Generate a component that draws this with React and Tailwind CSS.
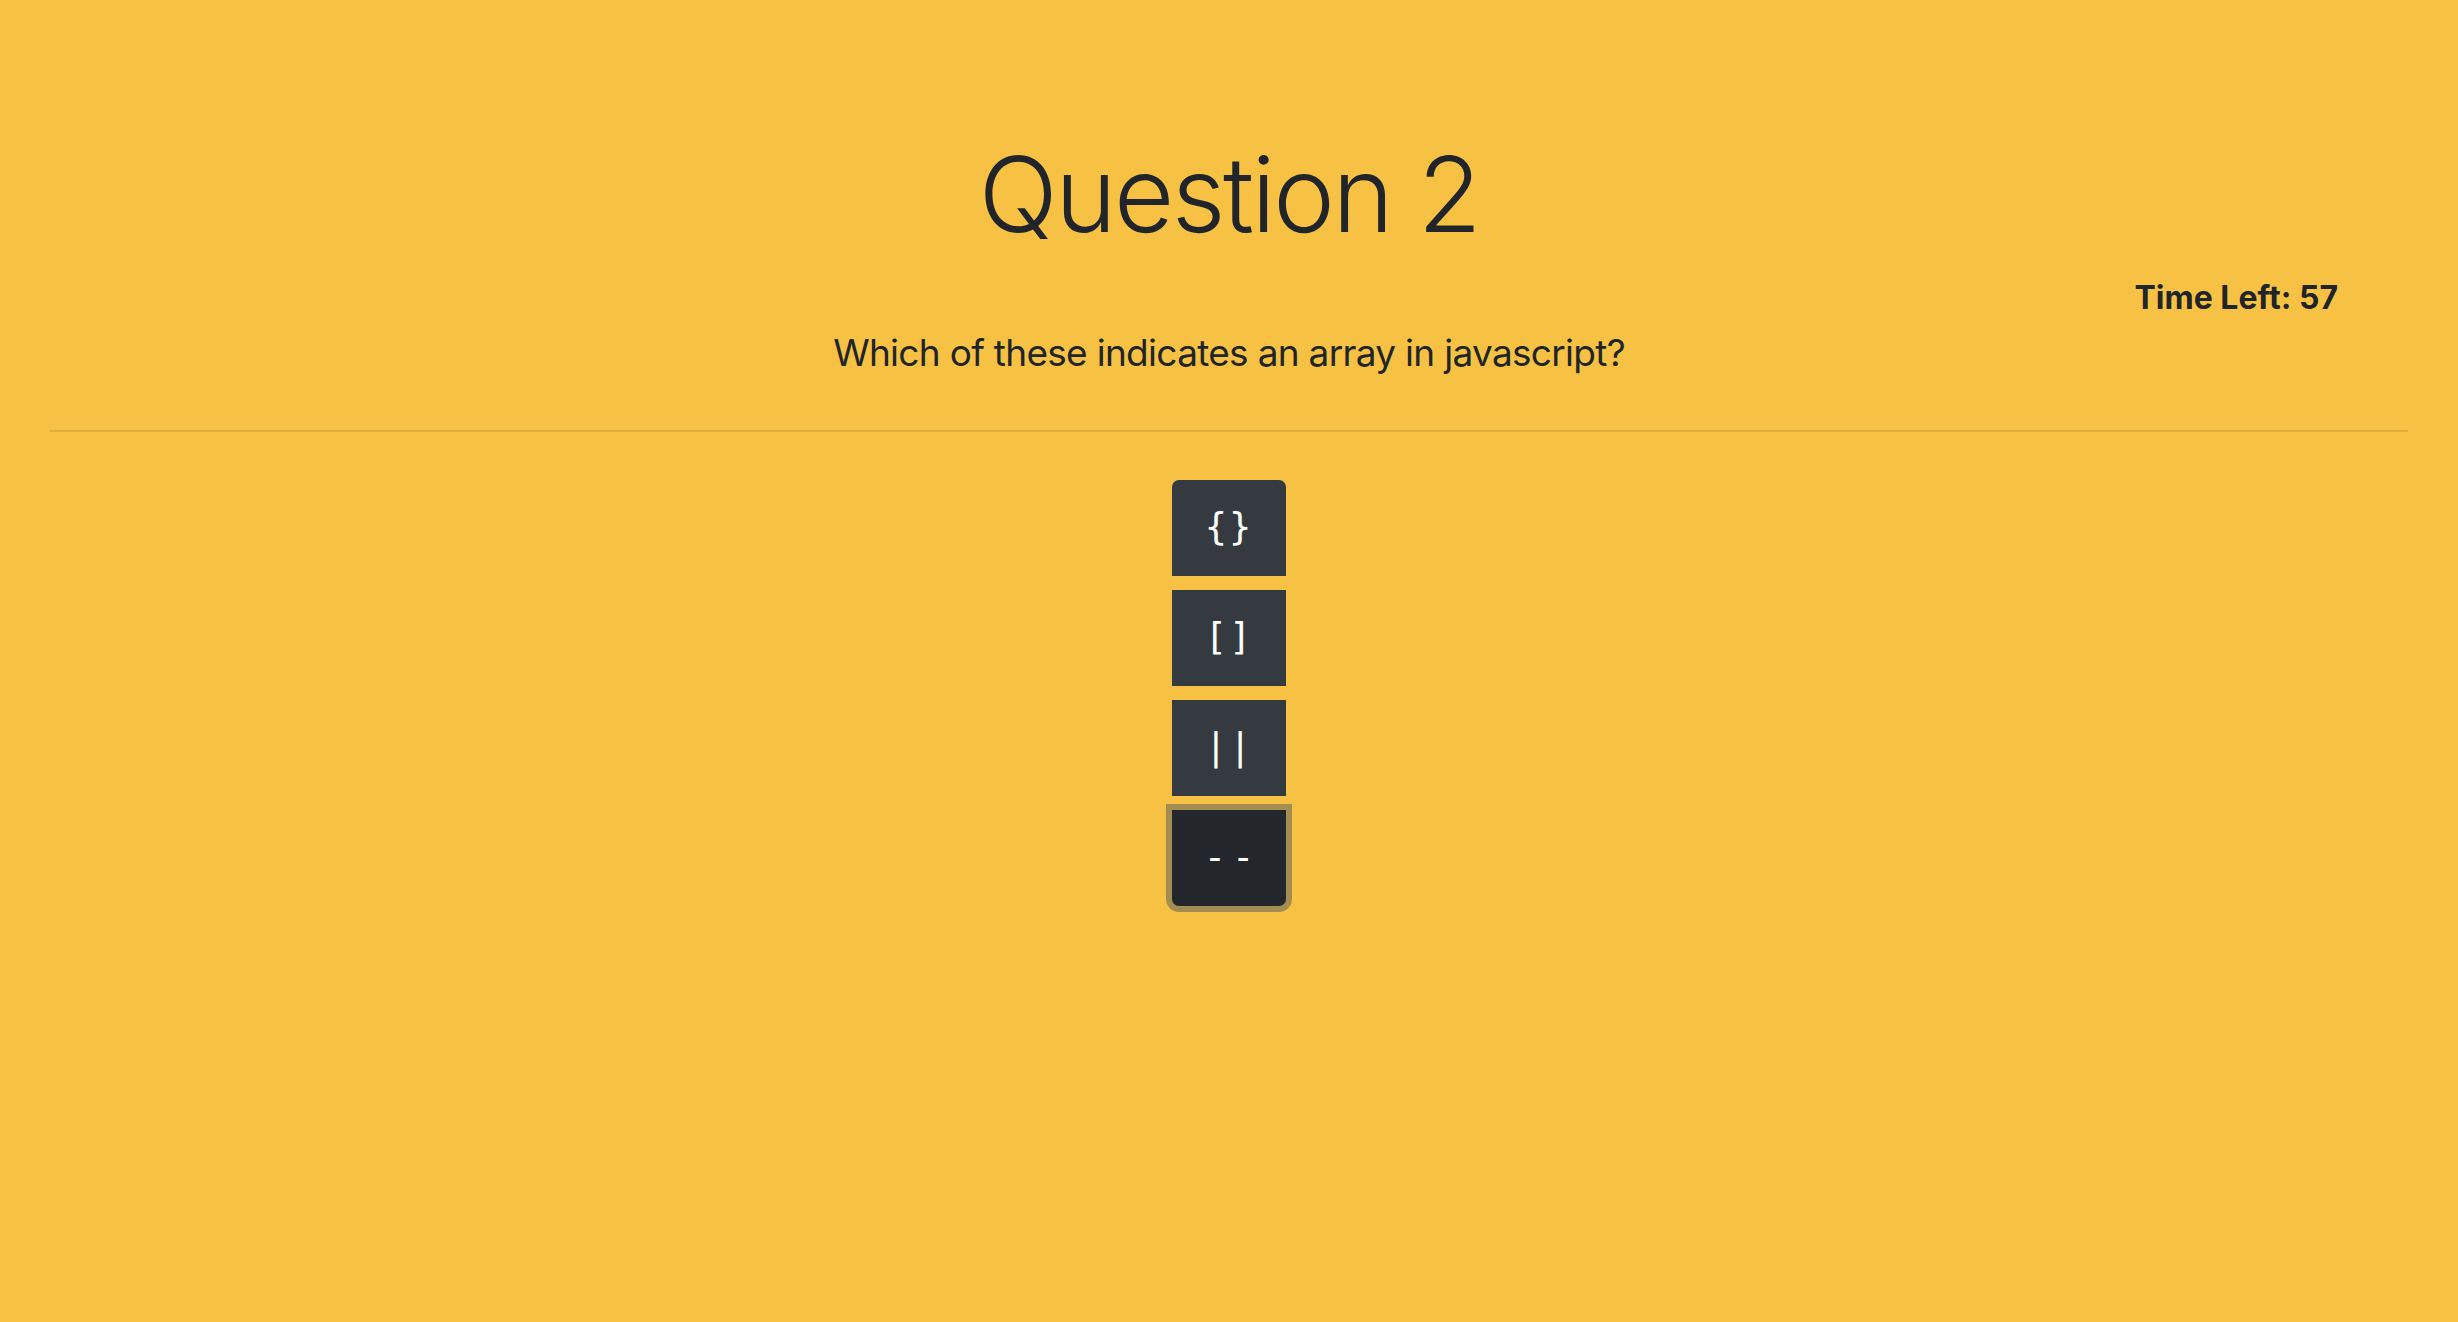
const answers = ["{}", "[]", "||", "--"];

function App() {
  return (
    <div className="min-h-screen bg-[#f7c244] text-[#212529] px-[50px] font-['Inter','Liberation_Sans',sans-serif]">
      {/* Header */}
      <div className="pt-[142px] text-center">
        <h1 className="text-[104px] leading-[104px] font-light tracking-[-2.5px]">Question 2</h1>
      </div>
      <div className="mt-[36px] flex justify-end pr-[70px]">
        <span className="text-[32px] leading-[32px] font-bold">Time Left: 57</span>
      </div>
      <p className="mt-[20px] text-center text-[37px] leading-[37px] tracking-[-0.7px]">
        Which of these indicates an array in javascript?
      </p>
      <hr className="mt-[59px] h-[2px] border-0 bg-[#deaf3d]" />

      {/* Answers */}
      <div className="mt-[48px] flex flex-col items-center gap-[14px]">
        {answers.map((a, i) => (
          <button
            key={a}
            className={
              i === 0
                ? "w-[114px] h-[96px] bg-[#343a40] text-white rounded-t-[7px] font-['DejaVu_Sans_Mono',monospace] text-[37px] tracking-[2px]"
                : i === answers.length - 1
                ? "w-[114px] h-[96px] bg-[#23272b] text-white rounded-b-[7px] font-['DejaVu_Sans_Mono',monospace] text-[37px] tracking-[6px] pl-[6px] shadow-[0_0_0_6px_rgba(82,88,93,0.5)]"
                : "w-[114px] h-[96px] bg-[#343a40] text-white font-['DejaVu_Sans_Mono',monospace] text-[37px] tracking-[2px]"
            }
          >
            {a}
          </button>
        ))}
      </div>
    </div>
  );
}

export default App;
